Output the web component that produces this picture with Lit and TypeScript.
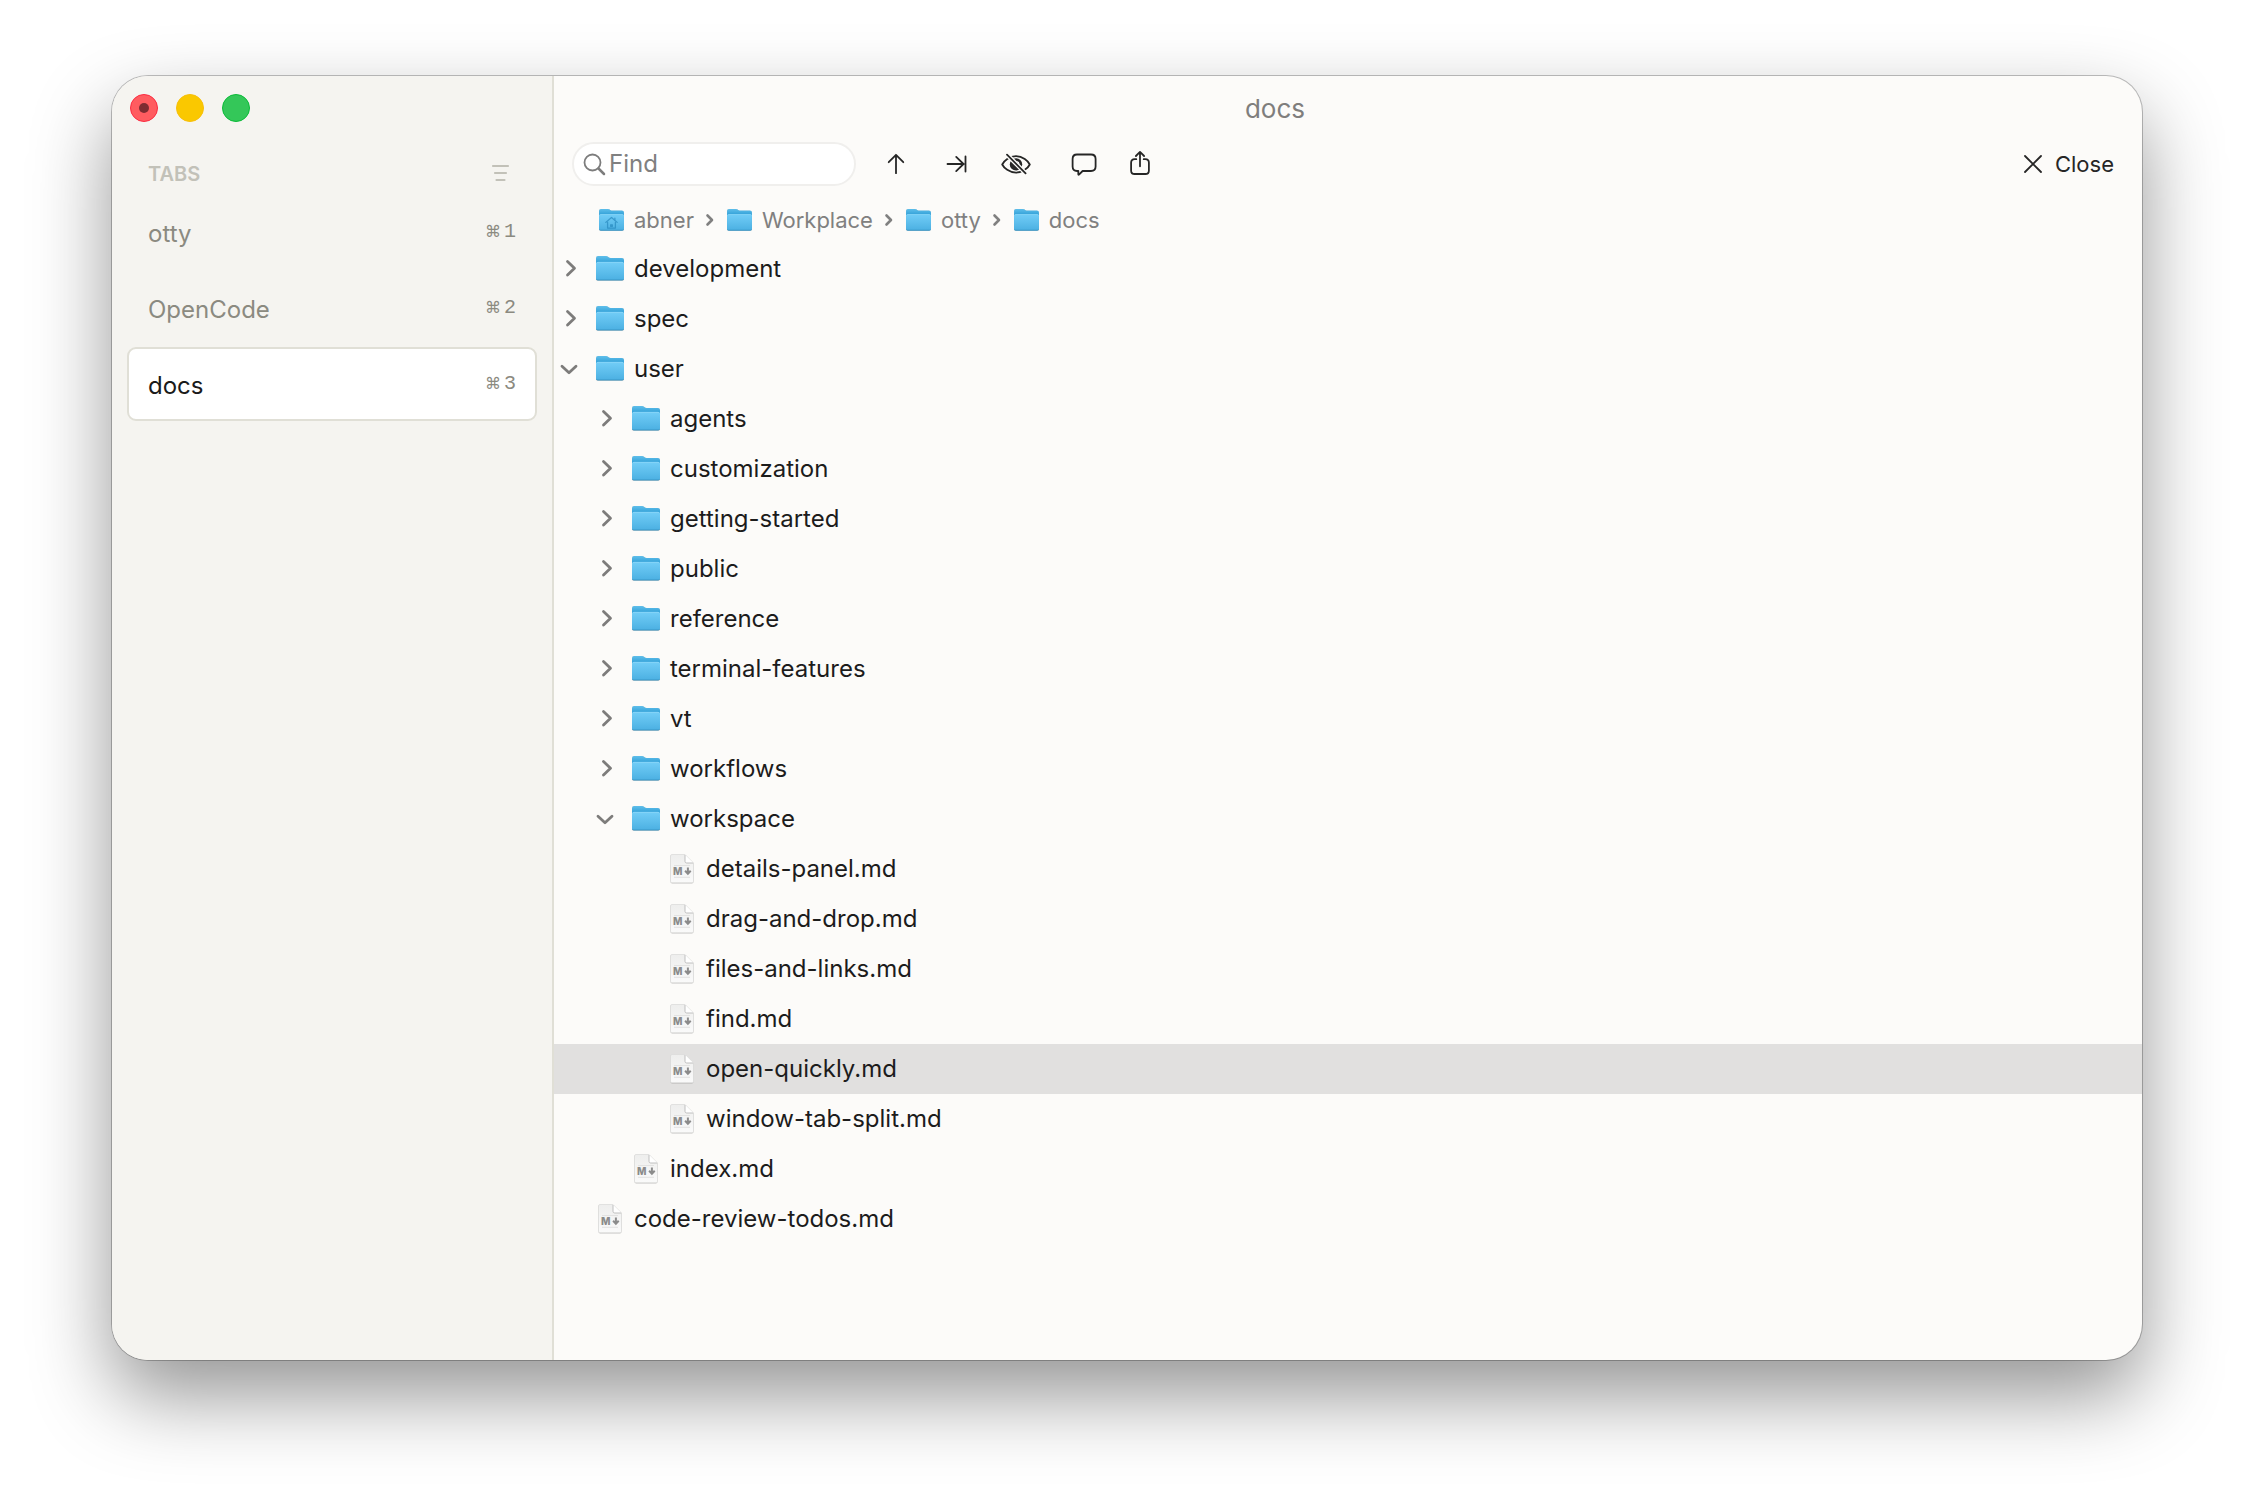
import { LitElement, html, css, svg, nothing } from "lit";
import { customElement, property, state } from "lit/decorators.js";
import { classMap } from "lit/directives/class-map.js";

type Kind = "folder" | "file";

interface Entry {
  name: string;
  kind: Kind;
  depth: number;
  open?: boolean;
}

const ENTRIES: Entry[] = [
  { name: "development", kind: "folder", depth: 0 },
  { name: "spec", kind: "folder", depth: 0 },
  { name: "user", kind: "folder", depth: 0, open: true },
  { name: "agents", kind: "folder", depth: 1 },
  { name: "customization", kind: "folder", depth: 1 },
  { name: "getting-started", kind: "folder", depth: 1 },
  { name: "public", kind: "folder", depth: 1 },
  { name: "reference", kind: "folder", depth: 1 },
  { name: "terminal-features", kind: "folder", depth: 1 },
  { name: "vt", kind: "folder", depth: 1 },
  { name: "workflows", kind: "folder", depth: 1 },
  { name: "workspace", kind: "folder", depth: 1, open: true },
  { name: "details-panel.md", kind: "file", depth: 2 },
  { name: "drag-and-drop.md", kind: "file", depth: 2 },
  { name: "files-and-links.md", kind: "file", depth: 2 },
  { name: "find.md", kind: "file", depth: 2 },
  { name: "open-quickly.md", kind: "file", depth: 2 },
  { name: "window-tab-split.md", kind: "file", depth: 2 },
  { name: "index.md", kind: "file", depth: 1 },
  { name: "code-review-todos.md", kind: "file", depth: 0 },
];

const TABS = ["otty", "OpenCode", "docs"];
const CRUMBS = ["abner", "Workplace", "otty", "docs"];

const reset = css`
  * {
    box-sizing: border-box;
  }
  button,
  input {
    margin: 0;
    padding: 0;
    border: 0;
    background: none;
    color: inherit;
    font: inherit;
    text-align: left;
  }
  svg {
    display: block;
    flex: none;
  }
`;

/* Blue folder, optionally carrying the home emblem. */
@customElement("folder-icon")
export class FolderIcon extends LitElement {
  @property({ type: Boolean }) home = false;

  static styles = css`
    :host {
      display: block;
      flex: none;
      width: 30px;
      height: 27px;
    }
    svg {
      display: block;
      width: 100%;
      height: 100%;
    }
  `;

  render() {
    return html`<svg viewBox="0 0 30 27" aria-hidden="true">
      <defs>
        <linearGradient id="back" x1="0" y1="0" x2="0" y2="1">
          <stop offset="0" stop-color="#5fbfeb" />
          <stop offset="0.3" stop-color="#2f9ed6" />
          <stop offset="1" stop-color="#3c9fd0" />
        </linearGradient>
        <linearGradient id="front" x1="0" y1="0" x2="0" y2="1">
          <stop offset="0" stop-color="#72cdf7" />
          <stop offset="1" stop-color="#4bb0e2" />
        </linearGradient>
      </defs>
      <path d="M1 24V3.4Q1 1 3.4 1H11q1.200 0 2 .8l.6.5q.8.7 2 .7h11Q29 3 29 5.400V24q0 2-2 2H3q-2 0-2-2z" fill="#000" opacity=".18" />
      <path d="M1 23V3.200Q1 1 3.200 1H11q1.200 0 2 .8l.6.5q.8.6 2 .6h11.200Q29 2.900 29 5v18q0 2-2 2H3q-2 0-2-2z" fill="url(#back)" />
      <path d="M1 9.200Q1 7 3 7h24q2 0 2 2.200V23.400q0 1.800-1.800 1.800H2.800Q1 25.200 1 23.400z" fill="url(#front)" />
      <path d="M1.400 8.600Q1.700 7.300 3 7.300h24q1.300 0 1.600 1.300" fill="none" stroke="#92daf9" stroke-width=".7" />
      <path d="M1.300 24.400q.5.600 1.500.6h24.400q1 0 1.500-.6" fill="none" stroke="#3189b8" stroke-width=".7" />
      ${this.home
        ? svg`<g fill="none" stroke="#2d8fc4" stroke-width="1.400" stroke-linejoin="round" stroke-linecap="round" opacity=".8">
            <path d="M8.600 16.200 15 10.600l6.400 5.600" />
            <path d="M18.800 11.300v2.200" />
            <path d="M10.600 16v6.600h8.800V16" />
            <path d="M14 19h2v1.600h-2z" fill="#2d8fc4" />
          </g>`
        : nothing}
    </svg>`;
  }
}

/* White sheet with a folded corner and the Markdown mark. */
@customElement("markdown-icon")
export class MarkdownIcon extends LitElement {
  static styles = css`
    :host {
      display: block;
      flex: none;
      width: 30px;
      height: 31px;
    }
    svg {
      display: block;
      width: 100%;
      height: 100%;
    }
    .mark {
      font: 800 10px "Inter", "Liberation Sans", sans-serif;
      fill: #8b8b8b;
    }
  `;

  render() {
    return html`<svg viewBox="0 0 30 31" aria-hidden="true">
      <defs>
        <linearGradient id="sheet" x1="0" y1="0" x2="0" y2="1">
          <stop offset="0" stop-color="#eeeeed" />
          <stop offset="1" stop-color="#fafafa" />
        </linearGradient>
      </defs>
      <path d="M3.500 3.400Q3.500 2 5 2h13l8.500 8.500v18.600q0 1.400-1.400 1.400H5q-1.500 0-1.500-1.400z" fill="#000" opacity=".22" />
      <path d="M3.500 3Q3.500 1.500 5 1.500h13l8.500 8.500v18.200q0 1.500-1.400 1.500H5q-1.500 0-1.500-1.500z" fill="url(#sheet)" stroke="#dcdcdb" stroke-width=".8" />
      <path d="M18 1.700V8.300q0 1.700 1.700 1.700h6.600z" fill="#fff" />
      <path d="M18 2V8.300q0 1.700 1.700 1.700h6.400" fill="none" stroke="#b9b9b9" stroke-width=".9" />
      <path d="M7 12.500h16M7 24.300h16" stroke="#e2e2e1" stroke-width="1" />
      <text class="mark" x="6" y="21.600">M</text>
      <path d="M20.900 14.500v5.400M18.100 17.800l2.800 2.900 2.800-2.900" fill="none" stroke="#8b8b8b" stroke-width="2" />
    </svg>`;
  }
}

@customElement("tab-sidebar")
export class TabSidebar extends LitElement {
  @property({ attribute: false }) tabs: string[] = [];
  @property({ type: Number }) active = 0;

  static styles = [
    reset,
    css`
      :host {
        display: flex;
        flex-direction: column;
        background: #f5f4f0;
        border-right: 2px solid #e0dfd6;
      }
      .lights {
        display: flex;
        align-items: center;
        gap: 18px;
        height: 64px;
        padding-left: 18px;
      }
      .light {
        display: grid;
        place-items: center;
        width: 28px;
        height: 28px;
        border-radius: 50%;
      }
      .red {
        background: #ff5c60;
        border: 1px solid #fb2c41;
      }
      .red::after {
        content: "";
        width: 10px;
        height: 10px;
        border-radius: 50%;
        background: #7e2c31;
      }
      .yellow {
        background: #fac800;
        border: 1px solid #f7bf0a;
      }
      .green {
        background: #34c759;
        border: 1px solid #0abb38;
      }
      .heading {
        display: flex;
        align-items: center;
        justify-content: space-between;
        height: 55px;
        padding: 13px 42px 0 36px;
        color: #c2c1b8;
      }
      h2 {
        margin: 0;
        font-size: 20px;
        line-height: 24px;
        font-weight: 600;
      }
      .tabs {
        display: flex;
        flex-direction: column;
        gap: 2px;
        padding: 0 15px;
      }
      .tab {
        display: flex;
        align-items: center;
        justify-content: space-between;
        height: 74px;
        padding: 3px 19px 0;
        border: 2px solid transparent;
        border-radius: 9px;
        color: #8b8a80;
        font-size: 24px;
        line-height: 30px;
      }
      .tab.active {
        background: #fff;
        border-color: #e0dfd6;
        color: #1a1a1a;
      }
      kbd {
        display: flex;
        align-items: center;
        gap: 3px;
        padding-bottom: 4px;
        color: #8b8a80;
        font: 20px/24px "Liberation Mono", monospace;
      }
      .command {
        font: 16px/24px "DejaVu Sans", sans-serif;
      }
    `,
  ];

  private pick(index: number) {
    this.dispatchEvent(new CustomEvent("pick", { detail: index }));
  }

  render() {
    return html`
      <div class="lights">
        <button class="light red" aria-label="Close window"></button>
        <button class="light yellow" aria-label="Minimize window"></button>
        <button class="light green" aria-label="Zoom window"></button>
      </div>
      <div class="heading">
        <h2>TABS</h2>
        <button aria-label="Tab options">
          <svg width="20" height="20" viewBox="0 0 20 20" fill="none" stroke="currentColor" stroke-width="2.200" stroke-linecap="round">
            <path d="M3 2h15M5 9h11M6.500 16h8" />
          </svg>
        </button>
      </div>
      <div class="tabs" role="tablist" aria-orientation="vertical">
        ${this.tabs.map(
          (name, i) => html`<button
            class=${classMap({ tab: true, active: i === this.active })}
            role="tab"
            aria-selected=${i === this.active ? "true" : "false"}
            @click=${() => this.pick(i)}
          >
            <span>${name}</span>
            <kbd><span class="command">⌘</span><span>${i + 1}</span></kbd>
          </button>`
        )}
      </div>
    `;
  }
}

@customElement("file-tree")
export class FileTree extends LitElement {
  @state() private entries = ENTRIES;
  @state() private selected = "open-quickly.md";

  static styles = [
    reset,
    css`
      :host {
        display: block;
      }
      .row {
        display: flex;
        align-items: center;
        width: 100%;
        height: 50px;
        color: #1c1c1c;
        font-size: 24px;
        line-height: 30px;
      }
      .row.selected {
        background: #e1e0df;
      }
      .indent {
        flex: none;
        width: 36px;
      }
      .toggle {
        display: grid;
        place-items: center;
        flex: none;
        width: 41px;
        padding-right: 9px;
        color: #7d7c7b;
      }
      folder-icon,
      markdown-icon {
        margin-bottom: 2px;
      }
      .name {
        padding-left: 9px;
      }
    `,
  ];

  private visible(): Entry[] {
    const rows: Entry[] = [];
    let closedAt = Infinity;
    for (const entry of this.entries) {
      if (entry.depth > closedAt) continue;
      closedAt = entry.kind === "folder" && !entry.open ? entry.depth : Infinity;
      rows.push(entry);
    }
    return rows;
  }

  private activate(entry: Entry) {
    this.selected = entry.name;
    if (entry.kind === "folder") {
      this.entries = this.entries.map((e) => (e === entry ? { ...e, open: !e.open } : e));
    }
  }

  private chevron(entry: Entry) {
    if (entry.kind === "file") return nothing;
    return html`<svg width="20" height="20" viewBox="0 0 20 20" fill="none" stroke="currentColor" stroke-width="2.800" stroke-linecap="round" stroke-linejoin="round" aria-hidden="true">
      ${entry.open ? svg`<path d="M2 7.200 9 13.700l7-6.500" />` : svg`<path d="M7.500 2.500 14.500 9.300l-7 6.800" />`}
    </svg>`;
  }

  render() {
    return html`<div role="tree" aria-label="Files">
      ${this.visible().map(
        (entry) => html`<button
          class=${classMap({ row: true, selected: entry.name === this.selected })}
          role="treeitem"
          aria-level=${entry.depth + 1}
          aria-selected=${entry.name === this.selected ? "true" : "false"}
          aria-expanded=${entry.kind === "folder" ? String(!!entry.open) : nothing}
          @click=${() => this.activate(entry)}
        >
          ${Array.from({ length: entry.depth }, () => html`<span class="indent"></span>`)}
          <span class="toggle">${this.chevron(entry)}</span>
          ${entry.kind === "folder" ? html`<folder-icon></folder-icon>` : html`<markdown-icon></markdown-icon>`}
          <span class="name">${entry.name}</span>
        </button>`
      )}
    </div>`;
  }
}

@customElement("app-root")
export class AppRoot extends LitElement {
  @state() private active = 2;

  static styles = [
    reset,
    css`
      :host {
        display: flex;
        min-height: 100vh;
        box-sizing: border-box;
        padding: 76px 112px 148px;
        background: #fff;
        font-family: "Inter", "Liberation Sans", sans-serif;
      }
      .window {
        display: grid;
        grid-template-columns: 442px minmax(0, 1fr);
        flex: 1;
        overflow: hidden;
        border-radius: 36px;
        background: #fcfbf9;
        box-shadow: 0 0 0 1px rgba(0, 0, 0, 0.24), 0 36px 80px rgba(0, 0, 0, 0.42);
      }
      .titlebar {
        display: flex;
        align-items: center;
        justify-content: center;
        height: 66px;
        padding-right: 146px;
      }
      h1 {
        margin: 0;
        color: #7f7e7d;
        font-size: 26px;
        line-height: 32px;
        font-weight: 400;
      }
      .toolbar {
        display: flex;
        align-items: center;
        gap: 28px;
        height: 44px;
        padding: 0 28px 0 18px;
        color: #262626;
      }
      .group {
        display: flex;
        align-items: center;
        gap: 20px;
      }
      .group.share {
        gap: 16px;
      }
      .search {
        display: flex;
        align-items: center;
        gap: 2px;
        width: 284px;
        height: 44px;
        padding: 0 9px;
        border: 2px solid #f0efed;
        border-radius: 22px;
        background: #fff;
        color: #7d7d7d;
      }
      .search input {
        flex: 1;
        min-width: 0;
        outline: none;
        font-size: 24px;
        line-height: 30px;
      }
      .search input::placeholder {
        color: #808080;
        opacity: 1;
      }
      .tool {
        display: grid;
        place-items: center;
        width: 40px;
        height: 40px;
      }
      .close {
        display: flex;
        align-items: center;
        gap: 13px;
        margin-left: auto;
        font-size: 22px;
        line-height: 28px;
      }
      .crumbs {
        display: flex;
        align-items: center;
        gap: 10px;
        height: 58px;
        margin: 0;
        padding: 10px 0 0 44px;
        color: #808080;
        font-size: 22px;
        line-height: 28px;
        list-style: none;
      }
      .crumbs li {
        display: flex;
        align-items: center;
        gap: 10px;
      }
      .crumbs a {
        display: flex;
        align-items: center;
        gap: 9px;
        color: inherit;
        text-decoration: none;
      }
      .crumbs folder-icon {
        width: 27px;
        height: 24px;
      }
    `,
  ];

  render() {
    return html`
      <div class="window">
        <tab-sidebar .tabs=${TABS} .active=${this.active} @pick=${(e: CustomEvent<number>) => (this.active = e.detail)}></tab-sidebar>
        <main>
          <header class="titlebar"><h1>${TABS[this.active]}</h1></header>
          <div class="toolbar" role="toolbar" aria-label="File actions">
            <div class="group">
              <label class="search">
                <svg width="24" height="24" viewBox="0 0 24 24" fill="none" stroke="currentColor" stroke-linecap="round">
                  <circle cx="9.500" cy="10.500" r="8" stroke-width="1.800" />
                  <path d="m15.500 16.500 5.500 5.500" stroke-width="2.500" />
                </svg>
                <input type="search" aria-label="Find" placeholder="Find" />
              </label>
              <button class="tool" aria-label="Parent folder">
                <svg width="24" height="24" viewBox="0 0 24 24" fill="none" stroke="currentColor" stroke-width="1.800" stroke-linecap="round" stroke-linejoin="round">
                  <path d="M12 21.200V2.800M4.700 10.200 12 2.800l7.300 7.400" />
                </svg>
              </button>
              <button class="tool" aria-label="Jump to terminal folder">
                <svg width="24" height="24" viewBox="0 0 24 24" fill="none" stroke="currentColor" stroke-width="1.800" stroke-linecap="round" stroke-linejoin="round">
                  <path d="M3.500 12h16.200M12.200 4.900l7.300 7.100-7.300 7.100M21.500 4.500v15" />
                </svg>
              </button>
              <button class="tool" aria-label="Hidden files">
                <svg width="30" height="24" viewBox="0 0 30 24" fill="none" stroke="currentColor" stroke-width="1.800" stroke-linecap="round" stroke-linejoin="round">
                  <path d="M1.200 12.500C3 9 8.200 4.200 15 4.200S27 9 28.800 12.500C27 16 21.800 20.600 15 20.600S3 16 1.200 12.500z" />
                  <circle cx="15" cy="12.400" r="6.200" fill="currentColor" stroke="none" />
                  <path d="M15.800 9.500a2.600 2.600 0 0 1 2.200 2.500" stroke="#fcfbf9" stroke-width="1.200" />
                  <path d="M6.200 2.900 25 21.700" stroke="#fcfbf9" stroke-width="4.400" stroke-linecap="butt" />
                  <path d="M6 2.700l18.600 18.600" />
                </svg>
              </button>
            </div>
            <div class="group share">
              <button class="tool" aria-label="Comment">
                <svg width="26" height="26" viewBox="0 0 26 26" fill="none" stroke="currentColor" stroke-width="1.800" stroke-linejoin="round">
                  <path d="M6 3.500h14q4.600 0 4.600 4.400v7.700q0 4.400-4.600 4.400h-8.400l-3.600 3.600q-.7.600-.7-.4V20H6q-4.400 0-4.400-4.400V7.900Q1.600 3.500 6 3.500z" />
                </svg>
              </button>
              <button class="tool" aria-label="Share">
                <svg width="26" height="28" viewBox="0 0 26 28" fill="none" stroke="currentColor" stroke-width="1.800" stroke-linecap="round" stroke-linejoin="round">
                  <path d="M9.300 9.200H7.700q-3.600 0-3.600 3.600v7.600q0 3.600 3.600 3.600h10.600q3.600 0 3.600-3.600v-7.600q0-3.600-3.600-3.600h-1.600" />
                  <path d="M13 16.300V1.900M8.900 6 13 1.900l4.100 4.100" />
                </svg>
              </button>
            </div>
            <button class="close">
              <svg width="18" height="18" viewBox="0 0 18 18" fill="none" stroke="currentColor" stroke-width="1.800" stroke-linecap="round" aria-hidden="true">
                <path d="M1 1l16 16M17 1 1 17" />
              </svg>
              <span>Close</span>
            </button>
          </div>
          <nav aria-label="Path">
            <ol class="crumbs">
              ${CRUMBS.map(
                (name, i) => html`<li>
                  <a href="#${name}"><folder-icon ?home=${i === 0}></folder-icon><span>${name}</span></a>
                  ${i < CRUMBS.length - 1
                    ? html`<svg width="12" height="14" viewBox="0 0 12 14" fill="none" stroke="currentColor" stroke-width="2.600" stroke-linecap="round" stroke-linejoin="round" aria-hidden="true">
                        <path d="M3.500 2.500 8 7l-4.500 4.500" />
                      </svg>`
                    : nothing}
                </li>`
              )}
            </ol>
          </nav>
          <file-tree></file-tree>
        </main>
      </div>
    `;
  }
}
